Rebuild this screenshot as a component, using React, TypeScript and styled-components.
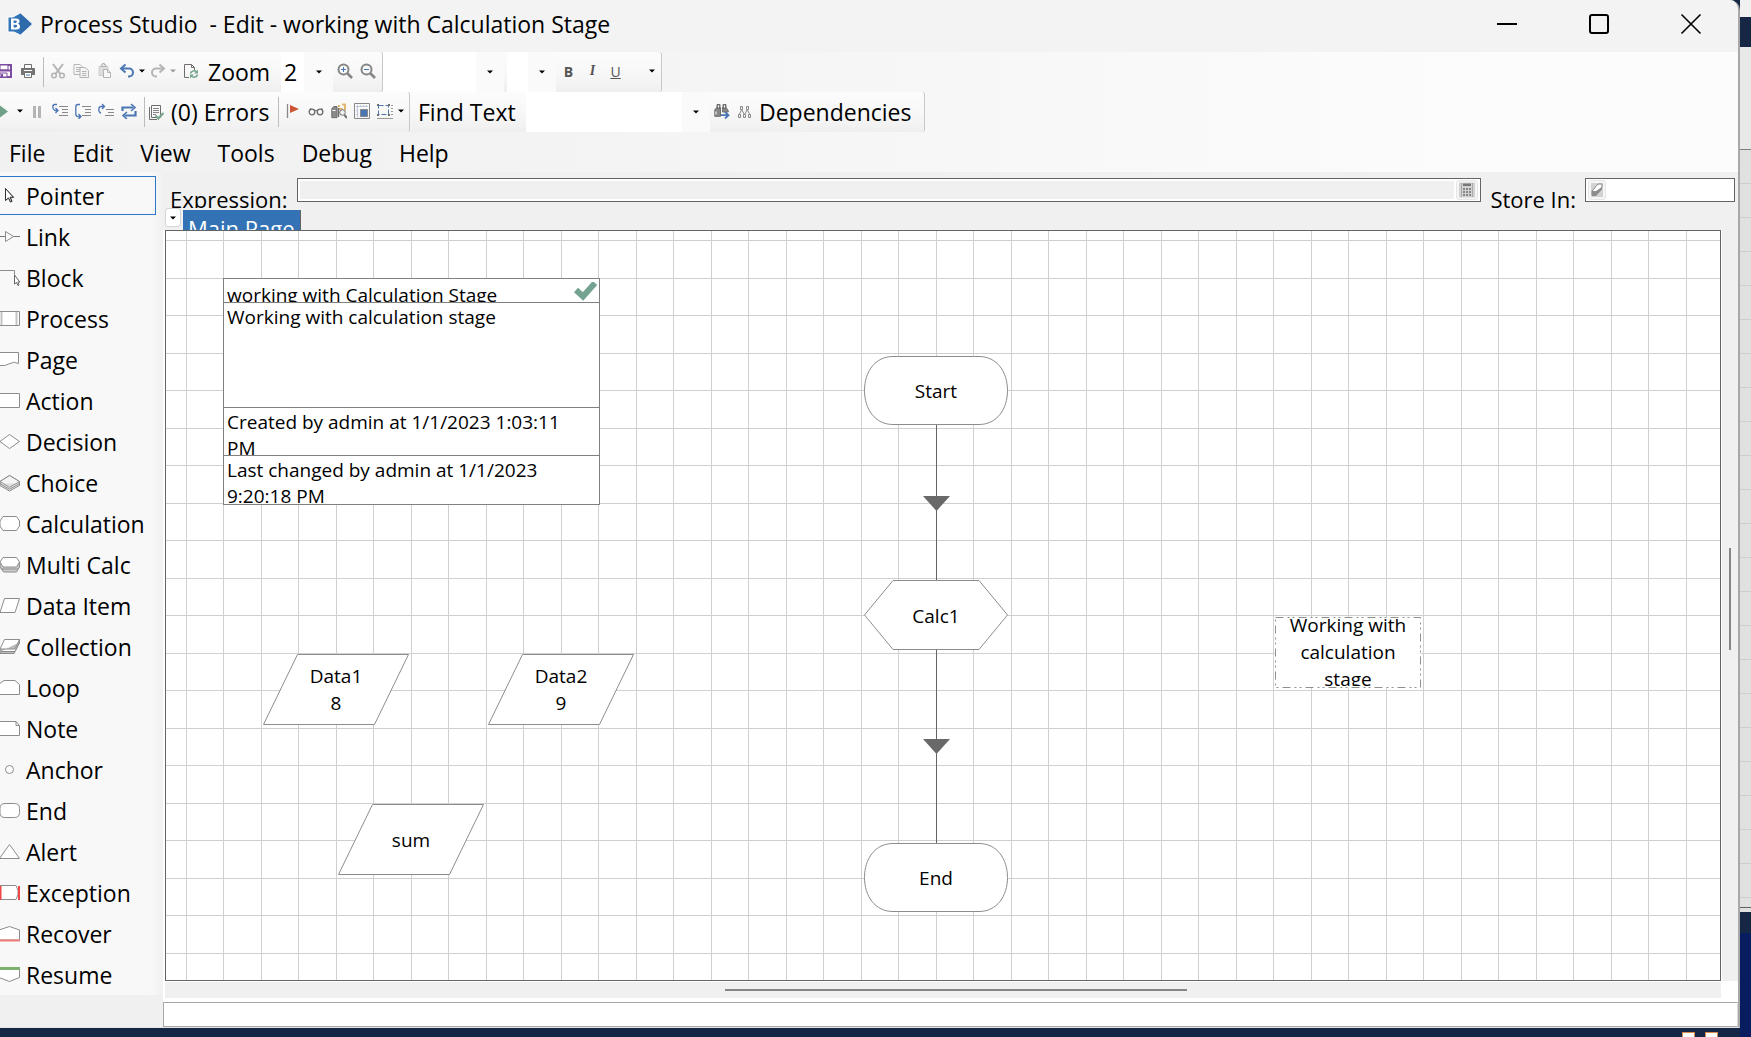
import React from "react";
import styled, { createGlobalStyle } from "styled-components";

const ink = "#6e6e6e";
const pale = "#b4b4b4";
const blue = "#4a76b4";
const edge = "#8c8c8c";

const GlobalStyle = createGlobalStyle`
  *, *::before, *::after { box-sizing: border-box; }
  body { margin: 0; background: #152744; }
  body, button, input, select {
    font-family: "Open Sans", "Noto Sans", sans-serif;
    font-size: 23px;
    color: #000;
  }
  button { background: none; border: 0; padding: 0; }
  svg { display: block; flex: none; }
`;

/* ---------- frame ---------- */

const Desktop = styled.div`
  display: flex;
  min-height: 100vh;
  overflow: hidden;
`;

const WindowColumn = styled.div`
  flex: 1;
  min-width: 0;
  display: flex;
  flex-direction: column;
`;

const AppWindow = styled.div`
  flex: 1;
  display: flex;
  flex-direction: column;
  background: #f0f0f0;
  border-right: 2px solid #a8a8a8;
  border-bottom: 1px solid #e4e4e8;
  border-top-right-radius: 10px;
  overflow: hidden;
`;

const Taskbar = styled.div`
  height: 9px;
  display: flex;
  justify-content: flex-end;
  align-items: flex-end;
  gap: 10px;
  padding-right: 22px;
  background: #152744;
`;

const TaskIcon = styled.span`
  width: 13px;
  height: 5px;
  background: #fff;
  border: 1px solid #d88a4a;
  border-bottom: 0;
`;

const Backdrop = styled.div`
  width: 11px;
  display: flex;
  flex-direction: column;
`;

const BackdropPart = styled.div<{ $h?: number; $bg: string; $line?: string }>`
  ${(p) => (p.$h ? `height: ${p.$h}px;` : "flex: 1;")}
  background: ${(p) => p.$bg};
  border-bottom: ${(p) => (p.$line ? `1px solid ${p.$line}` : "0")};
`;

const TitleBar = styled.header`
  height: 52px;
  display: flex;
  align-items: center;
  padding: 0 36px 4px 7px;
  background: #f3f3f3;
`;

const Title = styled.h1`
  flex: 1;
  margin: 0 0 0 7px;
  font-size: 23px;
  font-weight: 400;
  line-height: 32px;
  white-space: pre;
`;

const Captions = styled.div`
  display: flex;
  gap: 70px;
`;

const CaptionButton = styled.button`
  width: 22px;
  height: 22px;
`;

/* ---------- toolbars ---------- */

const Bars = styled.div`
  background: linear-gradient(90deg, #f1f1f1 0, #f3f3f3 30%, #fcfcfc 85%);
`;

const ToolRow = styled.div`
  display: flex;
  height: 40px;
`;

const ToolGroup = styled.div`
  display: flex;
  align-items: center;
  height: 40px;
  background: linear-gradient(#fcfcfc, #f8f8f8 50%, #efefef);
  border-right: 1px solid #c8c8c8;
  border-radius: 0 3px 3px 0;
`;

const Slot = styled.button<{ $w: number; $start?: boolean }>`
  width: ${(p) => p.$w}px;
  height: 40px;
  display: flex;
  align-items: center;
  justify-content: ${(p) => (p.$start ? "flex-start" : "center")};
  padding-bottom: 2px;
`;

const Separator = styled.span`
  width: 1px;
  height: 30px;
  margin: 0 2px 0 3px;
  background: #bcbcbc;
`;

const Spacer = styled.span`
  width: 3px;
`;

const ToolLabel = styled.label<{ $w: number; $pad: number }>`
  width: ${(p) => p.$w}px;
  padding-left: ${(p) => p.$pad}px;
  line-height: 32px;
  white-space: nowrap;
`;

const TextButton = styled.button<{ $w: number; $pad: number }>`
  width: ${(p) => p.$w}px;
  display: flex;
  align-items: center;
  gap: 7px;
  padding-left: ${(p) => p.$pad}px;
  line-height: 32px;
  white-space: nowrap;
`;

const ComboBox = styled.span<{ $w: number; $drop: number }>`
  position: relative;
  width: ${(p) => p.$w}px;
  height: 40px;
  display: flex;
  select {
    appearance: none;
    width: 100%;
    height: 40px;
    padding: 0 0 0 3px;
    border: 0;
    border-radius: 0;
    line-height: 32px;
    background: linear-gradient(90deg, #fff calc(100% - ${(p) => p.$drop}px), #fafafa 0);
  }
  svg {
    position: absolute;
    right: 11px;
    top: 18px;
    pointer-events: none;
  }
`;

const Menu = styled.nav`
  display: flex;
  gap: 27px;
  height: 40px;
  padding: 2px 9px 0;
  align-items: center;
  button { line-height: 32px; }
`;

/* ---------- palette ---------- */

const Body = styled.div`
  flex: 1;
  display: flex;
  min-height: 0;
`;

const Palette = styled.aside`
  width: 163px;
  flex: none;
  align-self: flex-start;
  display: flex;
  flex-direction: column;
  gap: 2px;
  padding: 4px 7px 1px 0;
  background: linear-gradient(90deg, #f8f8f8 150px, #f1f1f1);
`;

const PaletteItem = styled.button<{ $active?: boolean }>`
  display: flex;
  align-items: center;
  gap: 6px;
  height: 39px;
  border: 1px solid ${(p) => (p.$active ? "#2f78c8" : "transparent")};
  border-left: 0;
  line-height: 32px;
  white-space: nowrap;
`;

/* ---------- work area ---------- */

const Work = styled.main`
  flex: 1;
  min-width: 0;
  display: flex;
  flex-direction: column;
`;

const ExpressionRow = styled.div`
  height: 36px;
  display: flex;
  align-items: flex-start;
  gap: 9px;
  padding: 6px 3px 0 7px;
  overflow: hidden;
`;

const FieldLabel = styled.label`
  font-size: 22px;
  line-height: 42px;
  white-space: nowrap;
`;

const Field = styled.div<{ $w?: number }>`
  ${(p) => (p.$w ? `width: ${p.$w}px;` : "flex: 1;")}
  height: 24px;
  display: flex;
  align-items: center;
  gap: 2px;
  padding: 1px 2px;
  background: #fff;
  border: 1px solid #646464;
`;

const FieldInput = styled.input<{ $shade?: boolean }>`
  flex: 1;
  min-width: 0;
  height: 18px;
  padding: 0 4px;
  border: 0;
  font-size: 14px;
  background: ${(p) => (p.$shade ? "#f0f0f0" : "#fff")};
`;

const FieldButton = styled.button`
  height: 20px;
  padding: 0 2px;
  display: flex;
  align-items: center;
  background: #f6f6f6;
  border: 1px solid #e6e6e6;
  border-radius: 3px;
`;

const TabRow = styled.div`
  height: 22px;
  display: flex;
  gap: 2px;
  padding-left: 2px;
  overflow: hidden;
`;

const TabMenu = styled.button`
  width: 16px;
  height: 19px;
  display: flex;
  align-items: center;
  justify-content: center;
  background: #fff;
  border: 1px solid #d4d4d4;
  border-radius: 3px;
`;

const Tab = styled.button`
  height: 36px;
  margin-top: 2px;
  padding: 0 5px;
  color: #fff;
  font-size: 22px;
  line-height: 32px;
  white-space: nowrap;
  background: #3373b5;
  border-right: 1px solid #646464;
`;

const Sheet = styled.div`
  flex: 1;
  display: grid;
  grid-template-columns: minmax(0, 1fr) 17px;
  grid-template-rows: minmax(0, 1fr) 17px;
  padding-left: 2px;
  background: #fff;
`;

const Canvas = styled.section`
  position: relative;
  overflow: hidden;
  border: 1px solid #646464;
  background-color: #fff;
  background-image:
    linear-gradient(90deg, #d0d0d0 1px, transparent 1px, transparent 37px, #d0d0d0 37px, #d0d0d0 38px, transparent 38px),
    linear-gradient(#d0d0d0 1px, transparent 1px, transparent 38px, #d0d0d0 38px, #d0d0d0 39px, transparent 39px);
  background-size: 75px 75px;
  background-position: 20px 9px;
`;

const ScrollX = styled.div`
  margin-top: 1px;
  display: flex;
  align-items: center;
  padding-left: 560px;
  background: #f0f0f0;
`;

const ThumbX = styled.div`
  width: 462px;
  height: 2px;
  background: #868686;
`;

const ScrollY = styled.div`
  margin-left: 1px;
  display: flex;
  justify-content: center;
  padding-top: 318px;
  background: #f0f0f0;
`;

const ThumbY = styled.div`
  width: 2px;
  height: 102px;
  background: #868686;
`;

const Status = styled.div`
  display: flex;
  padding-top: 4px;
  background: #fff;
  input {
    flex: 1;
    height: 25px;
    border: 1px solid #a8a8ac;
    border-right-color: #dcdcdc;
    padding: 0 4px;
    font-size: 14px;
  }
`;

/* ---------- diagram ---------- */

const Stage = styled.div<{ $x: number; $y: number; $w: number; $h: number }>`
  position: absolute;
  left: ${(p) => p.$x}px;
  top: ${(p) => p.$y}px;
  width: ${(p) => p.$w}px;
  height: ${(p) => p.$h}px;
  display: grid;
  place-items: center;
  > * { grid-area: 1 / 1; }
`;

const StageText = styled.div<{ $single?: boolean }>`
  padding-top: ${(p) => (p.$single ? 2 : 0)}px;
  font-size: 19px;
  line-height: 27px;
  text-align: center;
`;

const NoteText = styled.div`
  display: flex;
  align-items: center;
  height: 67px;
  padding: 0 10px;
  overflow: hidden;
  font-size: 19px;
  line-height: 27px;
  text-align: center;
`;

const Info = styled.div`
  position: absolute;
  left: 57px;
  top: 47px;
  width: 377px;
  background: #fff;
  border: 1px solid #808080;
  font-size: 19px;
`;

const InfoCell = styled.div<{ $h: number; $low?: boolean }>`
  height: ${(p) => p.$h}px;
  padding: ${(p) => (p.$low ? "3px 2px 0 3px" : "1px 20px 0 3px")};
  line-height: 26px;
  overflow: hidden;
  display: flex;
  justify-content: space-between;
  & + & { border-top: 1px solid #808080; }
`;

const Links = styled.svg`
  position: absolute;
  left: 757px;
  top: 193px;
`;

/* ---------- icons ---------- */

const Icon = ({ w = 16, h = 16, children }: { w?: number; h?: number; children: React.ReactNode }) => (
  <svg width={w} height={h} viewBox={`0 0 ${w} ${h}`} fill="none" stroke={ink} aria-hidden="true">
    {children}
  </svg>
);

const Caret = ({ color = "#000" }: { color?: string }) => (
  <svg width="6" height="4" viewBox="0 0 6 4" aria-hidden="true">
    <path d="M0 .5h6L3 3.5z" fill={color} />
  </svg>
);

const stepLines = (x: number) => (
  <path d={`M${x} 3.5h${16 - x}M${x + 3} 6.5h${13 - x}M${x + 3} 9.5h${13 - x}M${x} 12.5h${16 - x}`} stroke="#888" />
);

const icons: Record<string, React.ReactNode> = {
  save: (
    <Icon>
      <path d="M-3 2h14v12h-14" stroke="#7c4ca0" strokeWidth="2" />
      <path d="M0 2h8v5H0zM0 10h7v4H0z" fill="#fff" stroke="#7c4ca0" />
      <path d="M0 7.500h10" stroke="#7c4ca0" strokeWidth="2" />
      <path d="M2 11v3" stroke="#7c4ca0" strokeWidth="2" />
    </Icon>
  ),
  print: (
    <Icon>
      <path d="M4.500 5V1.500h7V5" />
      <path d="M1.500 5.500h13v6h-13z" fill="#777" />
      <path d="M4 7.500h8" stroke="#fff" />
      <path d="M4.500 9.500h7v5h-7z" fill="#fff" />
      <path d="M6 12h4" stroke={blue} />
    </Icon>
  ),
  cut: (
    <Icon>
      <path d="M3 1l7.500 10M13 1L5.500 11" stroke={pale} strokeWidth="2" />
      <circle cx="4" cy="12.500" r="2.300" stroke={pale} strokeWidth="1.500" />
      <circle cx="12" cy="12.500" r="2.300" stroke={pale} strokeWidth="1.500" />
    </Icon>
  ),
  copy: (
    <Icon>
      <path d="M1 1.500h6l2 2v8H1z" stroke={pale} />
      <path d="M3 4.500h4M3 6.500h4M3 8.500h4" stroke={pale} />
      <path d="M7 4.500h5l3.500 3v7H7z" fill="#f4f4f4" stroke={pale} />
      <path d="M9 8.500h4.500M9 10.500h4.500M9 12.500h4.500" stroke={pale} />
    </Icon>
  ),
  paste: (
    <Icon>
      <path d="M3 3.500h9v9H3z" fill="#ddd" stroke="#d0d0d0" />
      <path d="M5 3.500V2h1.500V.5h2V2H10v1.500z" stroke={pale} fill="#eee" />
      <path d="M7.500 6.500h4l3 3v5h-7z" fill="#f8f8f8" stroke={pale} />
      <path d="M11.500 6.500v3h3" stroke={pale} />
    </Icon>
  ),
  undo: (
    <Icon>
      <path d="M3 5.500h7a3.800 3.800 0 010 8H9" stroke={blue} strokeWidth="2" />
      <path d="M6.500 1.500L2 5.500l4.500 4" stroke={blue} strokeWidth="2" />
    </Icon>
  ),
  redo: (
    <Icon>
      <path d="M13 5.500H6a3.800 3.800 0 000 8h1" stroke={pale} strokeWidth="2" />
      <path d="M9.500 1.500l4.500 4-4.500 4" stroke={pale} strokeWidth="2" />
    </Icon>
  ),
  refresh: (
    <Icon>
      <path d="M6 14.500H1.500v-13h7l3 3V7" />
      <path d="M8.500 1.500v3h3" />
      <path d="M7.500 10.500a3.500 3.500 0 016-1.500M14.500 11.500a3.500 3.500 0 01-6 1.500" stroke="#78a58c" strokeWidth="1.600" />
      <path d="M15 6.500v4h-4zM7 15.500v-4h4z" fill="#78a58c" stroke="none" />
    </Icon>
  ),
  zoomIn: (
    <Icon>
      <circle cx="6.500" cy="6.500" r="5" stroke="#868686" strokeWidth="2" />
      <path d="M10.500 10.500L15 15" stroke="#868686" strokeWidth="2.600" />
      <path d="M4 6.500h5M6.500 4v5" stroke={blue} />
    </Icon>
  ),
  zoomOut: (
    <Icon>
      <circle cx="6.500" cy="6.500" r="5" stroke="#868686" strokeWidth="2" />
      <path d="M10.500 10.500L15 15" stroke="#868686" strokeWidth="2.600" />
      <path d="M4 6.500h5" stroke={blue} />
    </Icon>
  ),
  play: (
    <Icon w={9}>
      <path d="M0 2.500L8 8.500 0 14.500z" fill="#6fa088" stroke="none" />
    </Icon>
  ),
  pause: (
    <Icon w={8}>
      <path d="M1.500 3v12M6.500 3v12" stroke={pale} strokeWidth="3" />
    </Icon>
  ),
  stepInto: (
    <Icon>
      {stepLines(7)}
      <path d="M5 1.500H2.500Q.8 1.500.8 4t2 3.500H6M3.500 5L6 7.500 3.500 10" stroke={blue} strokeWidth="1.300" />
    </Icon>
  ),
  stepOver: (
    <Icon>
      {stepLines(7)}
      <path d="M5 1.500H3Q.8 1.500.8 4v7q0 2.500 2.200 2.500h2.500M3.500 11L6 13.500 3.500 16" stroke={blue} strokeWidth="1.300" />
    </Icon>
  ),
  stepOut: (
    <Icon>
      <path d="M8 6.500h8M10 9.500h6M7 12.500h9" stroke="#888" />
      <path d="M3 10Q.8 9.500.8 6.500T3 3.500h3.500M4 1l2.500 2.500L4 6" stroke={blue} strokeWidth="1.300" />
    </Icon>
  ),
  loopRun: (
    <Icon>
      <path d="M1.500 8V4.500h11M14.500 8v4.500h-11" stroke={blue} strokeWidth="2.200" />
      <path d="M10 1l4 3.500-4 3.500M6 9l-4 3.500L6 16" stroke={blue} strokeWidth="1.600" />
    </Icon>
  ),
  errors: (
    <Icon>
      <path d="M3.500 1.500h9v12h-9z" />
      <path d="M1.500 3v12.500H9" />
      <path d="M5 4.500h6M5 6.500h6M5 8.500h6M5 10.500h3" stroke="#888" />
      <path d="M7.500 11.500l2.800 3L15.500 9" stroke="#78a58c" strokeWidth="2.200" />
    </Icon>
  ),
  flag: (
    <Icon>
      <path d="M2.500 1v14" stroke="#888" strokeWidth="1.300" />
      <path d="M5 2l9 4-9 4z" fill="#cc5534" stroke="none" />
    </Icon>
  ),
  glasses: (
    <Icon>
      <circle cx="4" cy="9" r="2.800" strokeWidth="1.300" />
      <circle cx="12" cy="9" r="2.800" strokeWidth="1.300" />
      <path d="M6.500 8q1.500-1.200 3 0M1 8.500L3 5M15 8.500L13.500 5" />
    </Icon>
  ),
  findPage: (
    <Icon>
      <path d="M7 3h2M11 1.500h3v6M7.500 6h4" stroke="#e2b66e" strokeWidth="2" />
      <path d="M.8 5.500L3 3.500h3v11.200H.8z" fill="#8a8a8a" />
      <path d="M1.500 7.500h3" stroke="#fff" />
      <path d="M7.500 5v9" strokeWidth="1.500" />
      <circle cx="11.500" cy="9.500" r="2.800" fill="#eef2f6" />
      <path d="M13.500 12l2.500 3" strokeWidth="2" />
    </Icon>
  ),
  panel: (
    <Icon>
      <path d="M.5 .5h15v15H.5z" stroke="#888" />
      <path d="M2 3.500h12M3.500 2v12M6.500 2v2M9.500 2v2M12.500 2v2M2 7.500h2M2 11.500h2" stroke="#bcc8da" />
      <path d="M6.500 6.500h7v7h-7z" fill={blue} stroke="#888" />
    </Icon>
  ),
  select: (
    <Icon>
      <path d="M1.500 2.500h10v9h-10z" stroke={blue} strokeDasharray="5 2" />
      <path d="M0 1h2v2H0zM11 1h2v2h-2zM0 11h2v2H0zM11 11h2v2h-2z" fill={ink} stroke="none" />
      <path d="M14 2.500h2M14 5.500h2M14 8.500h2M14 11.500h2M0 15.500h16" stroke="#999" />
    </Icon>
  ),
  binoculars: (
    <Icon>
      <path d="M3 1.500h3v4H3zM9 1.500h3v4H9zM.8 6.500L3 4.500h3.500v8.800H.8zM8.500 4.500H12l2.200 3V9H8.500z" fill="#888" />
      <path d="M2 8.500v3M4.500 2.500v2M10.500 2.500v2" stroke="#fff" />
      <path d="M7 12.200h6.500M11 9l3.500 3.200L11 15.500" stroke={blue} strokeWidth="1.800" />
    </Icon>
  ),
  dependencies: (
    <Icon w={14} h={16}>
      <path d="M2.500 2.500h2v3h-2zM8.500 2.500h2v3h-2zM.5 10.500h2v3h-2zM5.500 10.500h2v3h-2zM10.500 10.500h2v3h-2zM3.500 6L1.500 10M4 6l2 4M9.500 6l2 4M9 6l-2 4" stroke="#888" />
    </Icon>
  ),
  calculator: (
    <Icon w={16} h={16}>
      <path d="M0 .5h16v15H0z" fill="#d2d2d2" stroke="none" />
      <path d="M2.500 1v14M13.500 1v14" stroke="#aaa" />
      <path d="M4 1.500h8v2.500H4z" fill="#777" stroke="none" />
      <path d="M4 7h8M4 10h8M4 13h8" stroke="#888" strokeWidth="2" strokeDasharray="2 1" />
    </Icon>
  ),
  eraser: (
    <Icon w={12} h={16}>
      <path d="M0 1h12v14H0z" fill="#d2d2d2" stroke="none" />
      <path d="M1 9l6-7h4v3l-6 8H1z" fill="#fff" stroke="#888" />
      <path d="M1 9h4l6-4v2.500L5 14H1z" fill="#8c8c8c" stroke="none" />
    </Icon>
  ),
};

const shape = (d: string, extra?: React.ReactNode, fill = "#fff") => (
  <svg width="20" height="20" viewBox="0 0 20 20" fill="none" stroke={edge} aria-hidden="true">
    <path d={d} fill={fill} />
    {extra}
  </svg>
);

const palette: [string, React.ReactNode][] = [
  ["Pointer", shape("M5.500 2.500v12l3-2.500 2 4 1.500-.7-1.800-4h3.300z", <path d="M5.500 2.500v12l3-2.500 2 4 1.500-.7-1.800-4h3.300z" stroke="#333" />)],
  ["Link", shape("M5.500 4.500L13.500 9.500l-8 5z", <path d="M0 9.500h5M13.500 9.500H20" stroke="#777" />, "#fafafa")],
  ["Block", shape("M-1 2.500h15.500v8", <path d="M14.500 7v9l2-1.500 1.500 3 1-.5-1.200-3h2z" stroke="#666" fill="#fff" />, "none")],
  ["Process", shape("M-1 2.500h20.500v14H-1z", <path d="M1.500 3v13M16.500 3v13" stroke="#c4c4c4" strokeWidth="2" />)],
  ["Page", shape("M-1 2.500h19.500v11q-4-2.500-8.500 0-5 3-11 2")],
  ["Action", shape("M-1 2.500h20.500v14H-1z")],
  ["Decision", shape("M0 9.500l9.500-7 10 7-10 7z")],
  ["Choice", shape("M0 8.500l9.500-6 10 6v4l-10 5.500L0 12.500z", <path d="M0 8.500l9.500-6 10 6-10 6zM0 10.500l9.500 5.700 10-5.700" fill="#fff" fillOpacity=".7" />, "#ddd")],
  ["Calculation", shape("M3 2.500h13.500l3 4.500v5l-3 4.500H3L0 12V7z")],
  ["Multi Calc", shape("M0 7v5l3.500 5h13l3-5V7z", <path d="M3 2.500h13.500L19.500 7l-3 5H3L0 7zM1 14h17" fill="#fff" />, "#ccc")],
  ["Data Item", shape("M4.500 2.500h15l-4.500 14H0z")],
  ["Collection", shape("M0 12v4.500h14L19.500 6V2.500z", <path d="M4.500 2.500h15L15 12H0zM1 14.500h14l4-9" fill="#fff" />, "#bbb")],
  ["Loop", shape("M-1 6l5-3.500h11l4.500 4v10H-1z")],
  ["Note", shape("M-1 2.500h17l3.500 4v10H-1z", <path d="M16 2.500v4h3.500" />)],
  ["Anchor", shape("", <circle cx="9.500" cy="9.500" r="4" fill="#fff" />)],
  ["End", shape("M5 2.500h9.500q5 0 5 5v4q0 5-5 5H5q-5 0-5-5v-4q0-5 5-5z")],
  ["Alert", shape("M9.500 2.500l10 14H-.5z")],
  ["Exception", shape("M-1 2.500h17l2 5v4l-2 5H-1z", <path d="M.5 3v14M19 3v14" stroke="#f04848" strokeWidth="2" />)],
  ["Recover", shape("M-1 6l10.500-3.500 10 3.500v10H-1z", <path d="M0 16.500h20" stroke="#ee7c78" strokeWidth="2" />)],
  ["Resume", shape("M-1 3h20.500v9.500l-10 4-10.500-4z", <path d="M0 3.500h20" stroke="#7cb270" strokeWidth="3" />)],
];

const Combo = ({ id, label, w, drop, options }: { id: string; label?: string; w: number; drop: number; options: string[] }) => (
  <ComboBox $w={w} $drop={drop}>
    <select id={id} aria-label={label}>
      {options.map((o) => (
        <option key={o}>{o}</option>
      ))}
    </select>
    <Caret />
  </ComboBox>
);

const Tool = ({ name, label, w = 23, start }: { name: string; label: string; w?: number; start?: boolean }) => (
  <Slot $w={w} $start={start} aria-label={label}>
    {icons[name]}
  </Slot>
);

const DropSlot = ({ w, label, color }: { w: number; label: string; color?: string }) => (
  <Slot $w={w} aria-label={label}>
    <Caret color={color} />
  </Slot>
);

const FormatSlot = styled(Slot)<{ $style: "bold" | "italic" | "underline" }>`
  font-size: 14px;
  color: #555;
  font-weight: ${(p) => (p.$style === "underline" ? 400 : 700)};
  font-family: ${(p) => (p.$style === "italic" ? '"Liberation Serif", serif' : '"Open Sans", sans-serif')};
  font-style: ${(p) => (p.$style === "italic" ? "italic" : "normal")};
  text-decoration: ${(p) => (p.$style === "underline" ? "underline" : "none")};
`;

const outlines = {
  pill: { w: 144, h: 69, d: "M29 .5H115C133 .5 143.500 16 143.500 34.500S133 68.500 115 68.500H29C11 68.500 .5 53 .5 34.500S11 .5 29 .5z" },
  hexagon: { w: 144, h: 70, d: "M29 .5H115L143.500 35 115 69.500H29L.5 35z" },
  slant: { w: 146, h: 71, d: "M34.500 .5H145.500L111.500 70.500H.5z" },
};

const DiagramStage = ({ kind, x, y, lines }: { kind: keyof typeof outlines; x: number; y: number; lines: string[] }) => {
  const o = outlines[kind];
  return (
    <Stage $x={x} $y={y} $w={o.w} $h={o.h}>
      <svg width={o.w} height={o.h} aria-hidden="true">
        <path d={o.d} fill="#fff" stroke={edge} />
      </svg>
      <StageText $single={lines.length === 1}>
        {lines.map((l) => (
          <div key={l}>{l}</div>
        ))}
      </StageText>
    </Stage>
  );
};

export default function App() {
  return (
    <>
      <GlobalStyle />
      <Desktop>
        <WindowColumn>
          <AppWindow>
            <TitleBar>
              <svg width="26" height="24" viewBox="0 0 26 24" aria-hidden="true">
                <path d="M13 1l12 11-12 11-6-3H1V5h5z" fill="#3474b8" stroke="#fff" />
                <path d="M13 1l12 11-12 11z" fill="#2f6bab" />
                <path d="M4 6.500h5q3.500 0 3.500 2.800 0 1.700-1.600 2.400 2.200.6 2.200 2.800 0 3-3.800 3H4zm2.600 2v2.400h1.800q1.400 0 1.400-1.200T8.400 8.500zm0 4.200v2.800h2q1.600 0 1.600-1.400t-1.600-1.400z" fill="#fff" fillRule="evenodd" />
              </svg>
              <Title>{"Process Studio  - Edit - working with Calculation Stage"}</Title>
              <Captions>
                <CaptionButton aria-label="Minimize">
                  <svg width="22" height="22"><path d="M1 11h20" stroke="#000" strokeWidth="2" /></svg>
                </CaptionButton>
                <CaptionButton aria-label="Maximize">
                  <svg width="22" height="22"><rect x="2" y="2" width="18" height="18" rx="2" fill="none" stroke="#000" strokeWidth="2" /></svg>
                </CaptionButton>
                <CaptionButton aria-label="Close">
                  <svg width="22" height="22"><path d="M1.500 1.500l19 19M20.500 1.500l-19 19" stroke="#000" strokeWidth="1.600" /></svg>
                </CaptionButton>
              </Captions>
            </TitleBar>

            <Bars>
              <ToolRow>
                <ToolGroup>
                  <Tool name="save" label="Save" w={16} start />
                  <Tool name="print" label="Print" w={24} />
                  <Separator />
                  <Tool name="cut" label="Cut" />
                  <Tool name="copy" label="Copy" />
                  <Tool name="paste" label="Paste" />
                  <Tool name="undo" label="Undo" />
                  <DropSlot w={8} label="Undo history" />
                  <Tool name="redo" label="Redo" />
                  <DropSlot w={8} label="Redo history" color="#999" />
                  <Tool name="refresh" label="Refresh" w={28} />
                  <ToolLabel $w={76} $pad={3} htmlFor="zoom">Zoom</ToolLabel>
                  <Combo id="zoom" w={52} drop={29} options={["2"]} />
                  <Tool name="zoomIn" label="Zoom in" />
                  <Tool name="zoomOut" label="Zoom out" />
                  <Spacer />
                </ToolGroup>
                <ToolGroup>
                  <Combo id="font" label="Font" w={121} drop={28} options={[""]} />
                  <Spacer />
                  <Combo id="size" label="Font size" w={49} drop={28} options={[""]} />
                  <FormatSlot $w={25} $style="bold">B</FormatSlot>
                  <FormatSlot $w={23} $style="italic">I</FormatSlot>
                  <FormatSlot $w={23} $style="underline">U</FormatSlot>
                  <Slot $w={16} aria-label="Font colour" />
                  <DropSlot w={18} label="More colours" />
                </ToolGroup>
              </ToolRow>
              <ToolRow>
                <ToolGroup>
                  <Tool name="play" label="Run" w={14} start />
                  <DropSlot w={12} label="Run options" />
                  <Tool name="pause" label="Pause" w={22} />
                  <Tool name="stepInto" label="Step into" />
                  <Tool name="stepOver" label="Step over" />
                  <Tool name="stepOut" label="Step out" />
                  <Tool name="loopRun" label="Reset" w={24} />
                  <Separator />
                  <TextButton $w={128} $pad={1}>{icons.errors}(0) Errors</TextButton>
                  <Separator />
                  <Tool name="flag" label="Breakpoint" />
                  <Tool name="glasses" label="Watch" />
                  <Tool name="findPage" label="Find page" />
                  <Tool name="panel" label="Pan view" />
                  <Tool name="select" label="Grid" />
                  <DropSlot w={10} label="Grid options" />
                  <Spacer />
                </ToolGroup>
                <ToolGroup>
                  <ToolLabel $w={116} $pad={8} htmlFor="find">Find Text</ToolLabel>
                  <Combo id="find" w={184} drop={28} options={[""]} />
                  <Tool name="binoculars" label="Find next" />
                  <TextButton $w={191} $pad={5}>{icons.dependencies}Dependencies</TextButton>
                </ToolGroup>
              </ToolRow>
              <Menu>
                {["File", "Edit", "View", "Tools", "Debug", "Help"].map((m) => (
                  <button key={m}>{m}</button>
                ))}
              </Menu>
            </Bars>

            <Body>
              <Palette>
                {palette.map(([name, icon], i) => (
                  <PaletteItem key={name} $active={i === 0}>
                    {icon}
                    {name}
                  </PaletteItem>
                ))}
              </Palette>

              <Work>
                <ExpressionRow>
                  <FieldLabel htmlFor="expression">Expression:</FieldLabel>
                  <Field>
                    <FieldInput id="expression" $shade />
                    <FieldButton aria-label="Edit expression">{icons.calculator}</FieldButton>
                  </Field>
                  <FieldLabel htmlFor="store">Store In:</FieldLabel>
                  <Field $w={150}>
                    <FieldButton aria-label="Clear">{icons.eraser}</FieldButton>
                    <FieldInput id="store" />
                  </Field>
                </ExpressionRow>
                <TabRow>
                  <TabMenu aria-label="Pages"><Caret /></TabMenu>
                  <Tab>Main Page</Tab>
                </TabRow>

                <Sheet>
                  <Canvas>
                    <Info>
                      <InfoCell $h={23} $low>
                        working with Calculation Stage
                        <svg width="23" height="20" viewBox="0 0 23 20" aria-hidden="true">
                          <path d="M2 8l7 6.500L21 1" fill="none" stroke="#74a392" strokeWidth="6" />
                        </svg>
                      </InfoCell>
                      <InfoCell $h={105}>Working with calculation stage</InfoCell>
                      <InfoCell $h={48}>Created by admin at 1/1/2023 1:03:11 PM</InfoCell>
                      <InfoCell $h={49}>Last changed by admin at 1/1/2023 9:20:18 PM</InfoCell>
                    </Info>

                    <Links width="27" height="419" viewBox="0 0 27 419" aria-hidden="true">
                      <path d="M13.500 0v419" stroke="#646464" />
                      <path d="M0 72h27L13.500 87zM0 315h27L13.500 330z" fill="#696969" />
                    </Links>
                    <DiagramStage kind="pill" x={698} y={125} lines={["Start"]} />
                    <DiagramStage kind="hexagon" x={698} y={349} lines={["Calc1"]} />
                    <DiagramStage kind="pill" x={698} y={612} lines={["End"]} />
                    <DiagramStage kind="slant" x={97} y={423} lines={["Data1", "8"]} />
                    <DiagramStage kind="slant" x={322} y={423} lines={["Data2", "9"]} />
                    <DiagramStage kind="slant" x={172} y={573} lines={["sum"]} />
                    <Stage $x={1109} $y={386} $w={146} $h={71}>
                      <svg width="146" height="71" aria-hidden="true">
                        <rect x=".5" y=".5" width="145" height="70" fill="#fff" stroke="#909090" strokeDasharray="8 4 2 3 2 4" />
                      </svg>
                      <NoteText>Working with calculation stage</NoteText>
                    </Stage>
                  </Canvas>
                  <ScrollY><ThumbY /></ScrollY>
                  <ScrollX><ThumbX /></ScrollX>
                </Sheet>
                <Status>
                  <input aria-label="Status" readOnly />
                </Status>
              </Work>
            </Body>
          </AppWindow>
          <Taskbar>
            <TaskIcon />
            <TaskIcon />
          </Taskbar>
        </WindowColumn>
        <Backdrop>
          <BackdropPart $h={17} $bg="#f0f0f0" />
          <BackdropPart $h={30} $bg="#152744" />
          <BackdropPart $h={103} $bg="#e8e8e8" $line="#808080" />
          <BackdropPart $bg="repeating-linear-gradient(#e0e0e0 0, #e0e0e0 33px, #cecece 33px, #cecece 34px)" $line="#606060" />
          <BackdropPart $h={4} $bg="#e0e0e0" />
          <BackdropPart $h={21} $bg="#152744" />
          <BackdropPart $h={104} $bg="#081c60" />
        </Backdrop>
      </Desktop>
    </>
  );
}
